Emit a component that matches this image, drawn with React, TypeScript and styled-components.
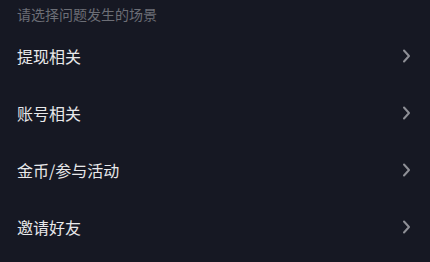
import React from "react";
import styled, { createGlobalStyle } from "styled-components";

const GlobalStyle = createGlobalStyle`
	html, body {
		margin: 0;
		padding: 0;
		background: #161823;
	}
	body {
		font-family: "Noto Sans CJK SC", "Noto Sans", sans-serif;
	}
`;

const Page = styled.div`
	width: 430px;
	height: 262px;
	background: #161823;
	display: flex;
	flex-direction: column;
	overflow: hidden;
`;

const Title = styled.div`
	height: 28px;
	padding: 0 17px 2px;
	display: flex;
	align-items: center;
	font-size: 14px;
	color: #6c6e76;
	line-height: 1;
`;

const Row = styled.div`
	height: 57px;
	padding: 0 19px 5px 17px;
	box-sizing: border-box;
	display: flex;
	align-items: center;
	justify-content: space-between;
`;

const Label = styled.span`
	font-size: 16px;
	color: #e8e8ea;
	line-height: 1;
`;

const Chevron = () => (
	<svg width="9" height="14" viewBox="0 0 9 14" fill="none">
		<path
			d="M2 1.5 L7 7 L2 12.5"
			stroke="#8e8f96"
			strokeWidth="2"
			strokeLinecap="round"
			strokeLinejoin="round"
		/>
	</svg>
);

const items = ["提现相关", "账号相关", "金币/参与活动", "邀请好友"];

const App: React.FunctionComponent = () => {
	return (
		<Page>
			<GlobalStyle />
			<Title>请选择问题发生的场景</Title>
			{items.map((item) => (
				<Row key={item}>
					<Label>{item}</Label>
					<Chevron />
				</Row>
			))}
		</Page>
	);
};

export default App;
